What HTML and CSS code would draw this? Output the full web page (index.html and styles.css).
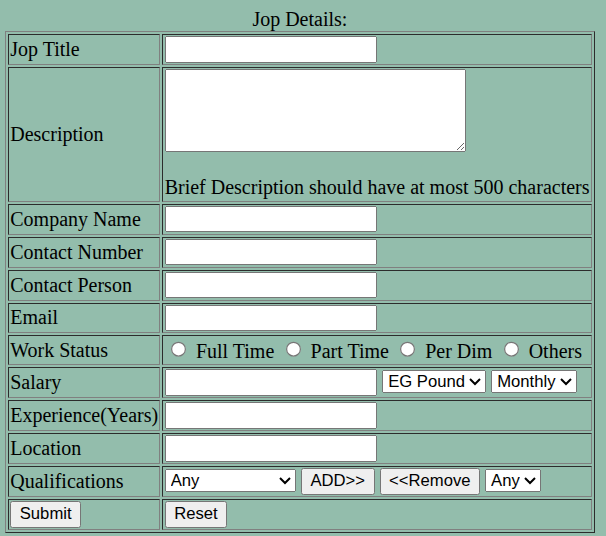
FILE: index.html
```html
<!DOCTYPE html>
<html>
<head>
<meta charset="utf-8">
<title>Jop Details</title>
<link rel="stylesheet" href="styles.css">
</head>
<body>
<form class="job-form">
<table class="form-table">
<caption class="form-caption">Jop Details:</caption>
<tr>
<td class="label">Jop Title</td>
<td class="field"><input type="text" class="text-input"></td>
</tr>
<tr>
<td class="label">Description</td>
<td class="field"><textarea class="desc-input"></textarea><div class="hint">Brief Description should have at most 500 characters</div></td>
</tr>
<tr>
<td class="label">Company Name</td>
<td class="field"><input type="text" class="text-input"></td>
</tr>
<tr>
<td class="label">Contact Number</td>
<td class="field"><input type="text" class="text-input"></td>
</tr>
<tr>
<td class="label">Contact Person</td>
<td class="field"><input type="text" class="text-input"></td>
</tr>
<tr>
<td class="label">Email</td>
<td class="field"><input type="text" class="text-input"></td>
</tr>
<tr>
<td class="label">Work Status</td>
<td class="field"><input type="radio" name="status" class="radio"> Full Time <input type="radio" name="status" class="radio"> Part Time <input type="radio" name="status" class="radio"> Per Dim <input type="radio" name="status" class="radio"> Others</td>
</tr>
<tr>
<td class="label">Salary</td>
<td class="field"><input type="text" class="text-input"> <select class="select"><option>EG Pound</option><option>US Dollar</option></select> <select class="select"><option>Monthly</option><option>Yearly</option></select></td>
</tr>
<tr>
<td class="label">Experience(Years)</td>
<td class="field"><input type="text" class="text-input"></td>
</tr>
<tr>
<td class="label">Location</td>
<td class="field"><input type="text" class="text-input"></td>
</tr>
<tr>
<td class="label">Qualifications</td>
<td class="field"><select class="select select-wide"><option>Any</option><option>Bachelor</option><option>Master</option></select> <button type="button" class="btn">ADD&gt;&gt;</button> <button type="button" class="btn">&lt;&lt;Remove</button> <select class="select"><option>Any</option></select></td>
</tr>
<tr>
<td class="label"><button type="submit" class="btn">Submit</button></td>
<td class="field"><button type="reset" class="btn">Reset</button></td>
</tr>
</table>
</form>
</body>
</html>
```

FILE: styles.css
```css
html {
  zoom: 1.25;
  background: #93bdac;
}

body {
  margin: 6.4px 4px;
  background: #93bdac;
  color: #000;
  font-family: "Liberation Serif", "Times New Roman", serif;
  font-size: 16px;
}

.job-form {
  margin: 0;
}

.form-table {
  border: 1px outset gray;
  border-spacing: 2px;
}

.form-caption {
  text-align: center;
}

.form-table td {
  border: 1px inset gray;
  padding: 1px;
}

.label {
  white-space: nowrap;
}

.field {
  white-space: nowrap;
}

.text-input,
.select,
.btn,
.desc-input {
  font-family: "Liberation Sans", Arial, sans-serif;
  font-size: 13.333px;
}

.text-input {
  box-sizing: border-box;
  width: 170px;
  height: 21.15px;
  margin: 0;
}

.desc-input {
  display: block;
  box-sizing: border-box;
  width: 241px;
  height: 66.4px;
  margin: 0;
}

.hint {
  margin-top: 19.4px;
}

.select-wide {
  width: 105px;
}
```
